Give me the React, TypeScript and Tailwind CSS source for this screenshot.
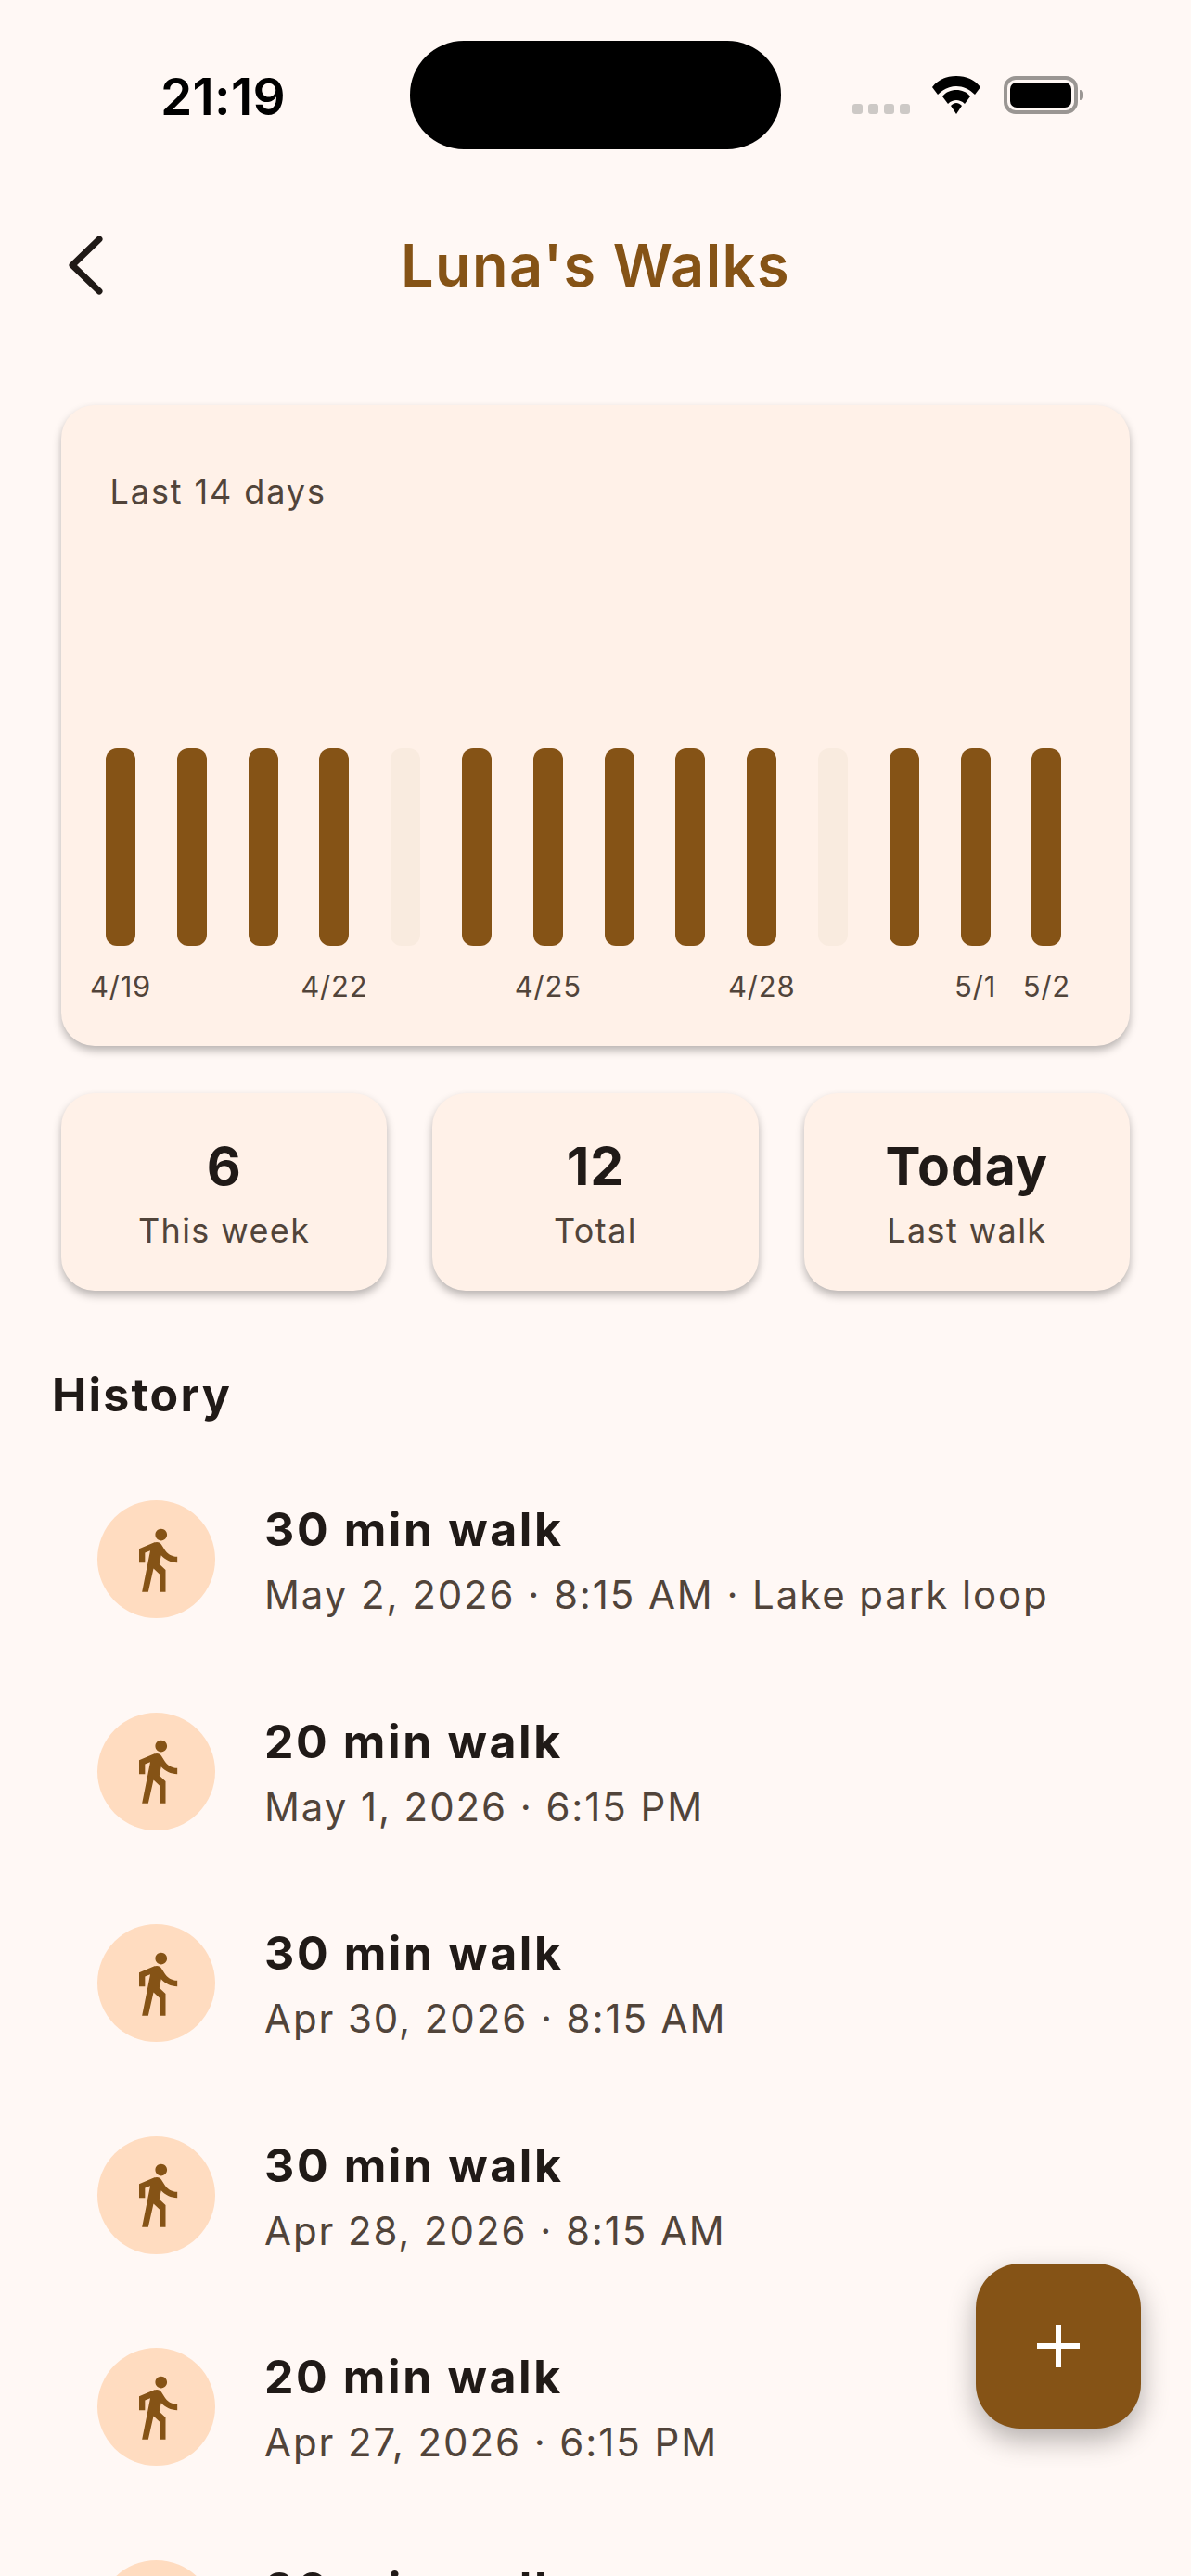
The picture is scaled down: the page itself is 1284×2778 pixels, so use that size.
const WALKS = [
  { title: "30 min walk", sub: "May 2, 2026 · 8:15 AM · Lake park loop" },
  { title: "20 min walk", sub: "May 1, 2026 · 6:15 PM" },
  { title: "30 min walk", sub: "Apr 30, 2026 · 8:15 AM" },
  { title: "30 min walk", sub: "Apr 28, 2026 · 8:15 AM" },
  { title: "20 min walk", sub: "Apr 27, 2026 · 6:15 PM" },
  { title: "30 min walk", sub: "Apr 26, 2026 · 8:15 AM" },
];

const DAYS = [
  { walked: true, label: "4/19" },
  { walked: true },
  { walked: true },
  { walked: true, label: "4/22" },
  { walked: false },
  { walked: true },
  { walked: true, label: "4/25" },
  { walked: true },
  { walked: true },
  { walked: true, label: "4/28" },
  { walked: false },
  { walked: true },
  { walked: true, label: "5/1" },
  { walked: true, label: "5/2" },
];

const STATS = [
  { value: "6", label: "This week" },
  { value: "12", label: "Total" },
  { value: "Today", label: "Last walk" },
];

function WalkIcon() {
  return (
    <svg className="w-[76px] h-[76px] text-[#855316]" viewBox="0 0 24 24" fill="currentColor">
      <path d="M13.5 5.5c1.1 0 2-.9 2-2s-.9-2-2-2-2 .9-2 2 .9 2 2 2zM9.8 8.9L7 23h2.1l1.8-8 2.1 2v6h2v-7.5l-2.1-2 .6-3C14.8 12 16.8 13 19 13v-2c-1.9 0-3.5-1-4.3-2.4l-1-1.6c-.4-.6-1-1-1.7-1-.3 0-.5.1-.8.1L6 8.3V13h2V9.6l1.8-.7" />
    </svg>
  );
}

function StatusBar() {
  return (
    <div className="relative h-[180px]">
      <span className="absolute left-[173px] top-[74px] text-[55px] leading-[60px] font-semibold tracking-[0.3px] text-black">21:19</span>
      <div className="absolute left-[442px] top-[44px] w-[400px] h-[117px] rounded-[58px] bg-black" />
      <div className="absolute left-[919px] top-[112px] flex gap-[6px]">
        <div className="w-[11px] h-[11px] rounded-[3px] bg-[#cdc9c6]" />
        <div className="w-[11px] h-[11px] rounded-[3px] bg-[#cdc9c6]" />
        <div className="w-[11px] h-[11px] rounded-[3px] bg-[#cdc9c6]" />
        <div className="w-[11px] h-[11px] rounded-[3px] bg-[#cdc9c6]" />
      </div>
      {/* wifi */}
      <svg className="absolute left-[1004px] top-[82px]" width="54" height="42" viewBox="0 0 54 42">
        <path d="M27 0C38 0 47 4 53 12L47 20C41 14 34 11 27 11C20 11 13 14 7 20L1 12C7 4 16 0 27 0Z" fill="#000" />
        <path d="M27 15C33 15 38 17 42 22L36 30C33 27 30 26 27 26C24 26 21 27 18 30L12 22C16 17 21 15 27 15Z" fill="#000" />
        <path d="M27 29C29 29 31 30 33 32L27 41L21 32C23 30 25 29 27 29Z" fill="#000" />
      </svg>
      {/* battery */}
      <div className="absolute left-[1082px] top-[82px] w-[80px] h-[41px] rounded-[13px] border-[4px] border-[#9a9693] p-[3px]">
        <div className="w-full h-full rounded-[7px] bg-black" />
      </div>
      <div className="absolute left-[1164px] top-[97px] w-[4px] h-[11px] rounded-r-[4px] bg-[#9a9693]" />
    </div>
  );
}

export default function App() {
  return (
    <div className="relative w-[1284px] h-[2778px] overflow-hidden bg-[#fff8f5] text-[#201a17] font-['Inter',sans-serif]">
      <StatusBar />

      {/* App bar */}
      <div className="relative h-[212px] flex items-start justify-center">
        <svg className="absolute left-[72px] top-[74px]" width="40" height="64" viewBox="0 0 40 64" fill="none" stroke="#201a17" strokeWidth="7" strokeLinecap="round" strokeLinejoin="round">
          <path d="M35 4L6 32L35 60" />
        </svg>
        <h1 className="mt-[76px] text-[63px] leading-[60px] font-semibold tracking-[1.45px] text-[#855316]">Luna's Walks</h1>
      </div>

      {/* Chart card */}
      <div className="ml-[66px] mt-[45px] w-[1152px] h-[691px] rounded-[36px] bg-[#fff1e8] shadow-[0_5px_10px_rgba(0,0,0,0.28)] pl-[25.6px] pr-[51.2px] flex flex-col">
        <p className="ml-[27px] mt-[73px] text-[36px] leading-[40px] tracking-[1.9px] text-[#51443a]">Last 14 days</p>
        <div className="mt-[257px] grid grid-cols-14">
          {DAYS.map((d, i) => (
            <div key={i} className="flex justify-center">
              <div className={`w-[32px] h-[213px] rounded-[12px] ${d.walked ? "bg-[#855316]" : "bg-[#f9ebdf]"}`} />
            </div>
          ))}
        </div>
        <div className="mt-[24px] grid grid-cols-14">
          {DAYS.map((d, i) => (
            <div key={i} className="flex justify-center">
              <span className="whitespace-nowrap text-[31px] leading-[40px] tracking-[0.8px] text-[#51443a]">{d.label ?? ""}</span>
            </div>
          ))}
        </div>
      </div>

      {/* Stats */}
      <div className="mt-[51px] mx-[66px] grid grid-cols-3 gap-[49px]">
        {STATS.map((s) => (
          <div key={s.label} className="h-[213px] rounded-[36px] bg-[#fff1e8] shadow-[0_5px_10px_rgba(0,0,0,0.28)] flex flex-col items-center pt-[46px]">
            <span className="text-[57px] leading-[66px] font-bold tracking-[0.9px]">{s.value}</span>
            <span className="mt-[14px] text-[36px] leading-[44px] tracking-[1.4px] text-[#51443a]">{s.label}</span>
          </div>
        ))}
      </div>

      {/* History */}
      <h2 className="ml-[56px] mt-[88px] text-[50px] leading-[48px] font-bold tracking-[2.2px]">History</h2>
      <div className="mt-[90px] flex flex-col gap-[101.6px]">
        {WALKS.map((w, i) => (
          <div key={i} className="flex items-center h-[127px] pl-[105px]">
            <div className="w-[127px] h-[127px] shrink-0 rounded-full bg-[#ffdcc0] flex items-center justify-center">
              <WalkIcon />
            </div>
            <div className="ml-[53px] pt-[2px] flex flex-col">
              <span className="text-[50px] leading-[58px] font-bold tracking-[2.6px]">{w.title}</span>
              <span className="mt-[17px] text-[42px] leading-[50px] tracking-[1.9px] text-[#51443a]">{w.sub}</span>
            </div>
          </div>
        ))}
      </div>

      {/* FAB */}
      <div className="absolute left-[1052px] top-[2441px] w-[178px] h-[178px] rounded-[48px] bg-[#855316] shadow-[0_12px_30px_rgba(0,0,0,0.3)] flex items-center justify-center">
        <svg width="46" height="46" viewBox="0 0 46 46" fill="#fff">
          <rect x="20" y="0" width="6" height="46" />
          <rect x="0" y="20" width="46" height="6" />
        </svg>
      </div>
    </div>
  );
}
